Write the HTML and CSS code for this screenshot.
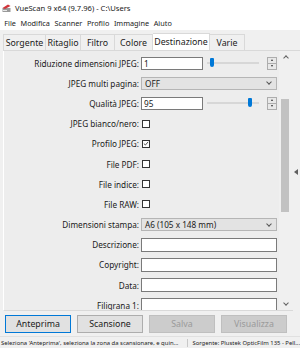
FILE: index.html
```html
<!DOCTYPE html>
<html>
<head>
<meta charset="utf-8">
<link rel="stylesheet" href="styles.css">
</head>
<body>
<div class="win">
  <div class="titlebar">
    <svg class="appicon" width="9" height="9" viewBox="0 0 9 9">
      <rect x="0.5" y="4" width="8" height="4" fill="#9a9a9a"/>
      <path d="M0.5 4 L6 0.5 L8.5 2 L3 5 Z" fill="#d2343a"/>
      <rect x="1" y="6" width="4" height="1" fill="#e6e6e6"/>
    </svg>
    <span class="title">VueScan 9 x64 (9.7.96) - C:\Users</span>
  </div>
  <div class="menubar">
    <span class="mi">File</span><span class="mi">Modifica</span><span class="mi">Scanner</span><span class="mi">Profilo</span><span class="mi">Immagine</span><span class="mi">Aiuto</span>
  </div>
  <div class="tabs">
    <div class="tab t1">Sorgente</div>
    <div class="tab t2">Ritaglio</div>
    <div class="tab t3">Filtro</div>
    <div class="tab t4">Colore</div>
    <div class="tab t5 sel">Destinazione</div>
    <div class="tab t6">Varie</div>
  </div>
  <div class="page">
    <div class="scrollarea">
      <div class="form">
        <div class="lbl">Riduzione dimensioni JPEG:</div>
        <div class="ctl">
          <div class="input short">1</div>
          <div class="slider"><div class="track"></div><div class="thumb" style="left:5px"></div></div>
          <div class="spin"><div class="up"></div><div class="dn"></div></div>
        </div>

        <div class="lbl">JPEG multi pagina:</div>
        <div class="ctl"><div class="select">OFF<span class="chev"></span></div></div>

        <div class="lbl">Qualità JPEG:</div>
        <div class="ctl">
          <div class="input short">95</div>
          <div class="slider"><div class="track"></div><div class="thumb" style="left:43px"></div></div>
          <div class="spin"><div class="up"></div><div class="dn"></div></div>
        </div>

        <div class="lbl">JPEG bianco/nero:</div>
        <div class="ctl"><div class="cb"></div></div>

        <div class="lbl">Profilo JPEG:</div>
        <div class="ctl"><div class="cb checked"><svg width="7" height="7" viewBox="0 0 7 7"><path d="M1 3.6 L2.8 5.3 L6 1.6" fill="none" stroke="#333" stroke-width="1"/></svg></div></div>

        <div class="lbl">File PDF:</div>
        <div class="ctl"><div class="cb"></div></div>

        <div class="lbl">File indice:</div>
        <div class="ctl"><div class="cb"></div></div>

        <div class="lbl">File RAW:</div>
        <div class="ctl"><div class="cb"></div></div>

        <div class="lbl">Dimensioni stampa:</div>
        <div class="ctl"><div class="select">A6 (105 x 148 mm)<span class="chev"></span></div></div>

        <div class="lbl">Descrizione:</div>
        <div class="ctl"><div class="input full"></div></div>

        <div class="lbl">Copyright:</div>
        <div class="ctl"><div class="input full"></div></div>

        <div class="lbl">Data:</div>
        <div class="ctl"><div class="input full"></div></div>

        <div class="lbl">Filigrana 1:</div>
        <div class="ctl"><div class="input full"></div></div>
      </div>
      <div class="vscroll">
        <div class="arrow-up"></div>
        <div class="vtrack"><div class="vthumb"></div></div>
        <div class="arrow-dn"></div>
      </div>
    </div>
    <div class="splitter"><div class="tri"></div></div>
  </div>
  <div class="buttons">
    <div class="btn default">Anteprima</div>
    <div class="btn">Scansione</div>
    <div class="btn disabled">Salva</div>
    <div class="btn disabled">Visualizza</div>
  </div>
  <div class="status">
    <div class="st1">Seleziona 'Anteprima', seleziona la zona da scansionare, e quin...</div>
    <div class="st2">Sorgente: Plustek OpticFilm 135 - Pell...</div>
  </div>
</div>
</body>
</html>
```
FILE: styles.css
```css
html, body {
  margin: 0;
  padding: 0;
  background: #f0f0f0;
}
.win {
  width: 300px;
  height: 348px;
  overflow: hidden;
  font-family: "Noto Sans", "Open Sans", sans-serif;
  color: #1a1a1a;
  background: #f0f0f0;
  display: flex;
  flex-direction: column;
}
.titlebar {
  height: 16px;
  background: #fff;
  display: flex;
  align-items: center;
  padding-left: 2px;
  gap: 4px;
  font-size: 7.6px;
}
.menubar {
  height: 14px;
  background: #fff;
  display: flex;
  align-items: center;
  padding-left: 2px;
  font-size: 7.3px;
}
.mi {
  padding: 0 2.3px;
}
.tabs {
  height: 18px;
  display: flex;
  align-items: flex-end;
  padding-left: 3px;
  padding-top: 2px;
}
.tab {
  height: 16px;
  box-sizing: border-box;
  border: 1px solid #d9d9d9;
  border-bottom: none;
  border-left: none;
  background: #f0f0f0;
  font-size: 8.8px;
  display: flex;
  align-items: center;
  justify-content: center;
}
.t1 { width: 43px; border-left: 1px solid #d9d9d9; }
.t2 { width: 35px; }
.t3 { width: 34px; }
.t4 { width: 38px; }
.t5 { width: 57px; }
.t6 { width: 35px; }
.tab.sel {
  background: #fff;
  height: 17px;
}
.page {
  height: 260px;
  display: flex;
  border-top: 1px solid #d9d9d9;
  margin-left: 3px;
}
.scrollarea {
  flex: 1;
  display: flex;
  border-left: 1px solid #fff;
  background: #ededed;
  border-bottom: 1px solid #d9d9d9;
  overflow: hidden;
}
.form {
  flex: 1;
  display: grid;
  grid-template-columns: 134px 136px;
  grid-auto-rows: 20.2px;
  column-gap: 2px;
  padding-top: 2px;
  padding-left: 1px;
  font-size: 8.2px;
  align-content: start;
}
.lbl {
  text-align: right;
  display: flex;
  align-items: center;
  justify-content: flex-end;
  white-space: nowrap;
}
.ctl {
  display: flex;
  align-items: center;
}
.input {
  height: 13px;
  box-sizing: border-box;
  border: 1px solid #7a7a7a;
  background: #fff;
  display: flex;
  align-items: center;
  padding-left: 2px;
}
.input.short { width: 62px; }
.input.full { width: 136px; height: 14px; }
.slider {
  position: relative;
  width: 54px;
  height: 12px;
  margin-left: 2px;
}
.track {
  position: absolute;
  left: 2px;
  right: 0;
  top: 5px;
  height: 2px;
  background: #d7d7d7;
}
.thumb {
  position: absolute;
  top: 1px;
  width: 4px;
  height: 9px;
  background: #0078d7;
  border-radius: 1px 1px 2px 2px;
}
.spin {
  margin-left: 8px;
  width: 10px;
  height: 13px;
  box-sizing: border-box;
  border: 1px solid #adadad;
  background: #e8e8e8;
  display: flex;
  flex-direction: column;
}
.spin .up, .spin .dn {
  flex: 1;
  position: relative;
}
.spin .up { border-bottom: 1px solid #adadad; }
.spin .up::after, .spin .dn::after {
  content: "";
  position: absolute;
  left: 2.5px;
  top: 1.5px;
  border-left: 1.5px solid transparent;
  border-right: 1.5px solid transparent;
}
.spin .up::after { border-bottom: 2px solid #333; }
.spin .dn::after { border-top: 2px solid #333; }
.select {
  width: 136px;
  height: 13px;
  box-sizing: border-box;
  border: 1px solid #b5b5b5;
  background: #e3e3e3;
  display: flex;
  align-items: center;
  padding-left: 3px;
  position: relative;
}
.chev {
  position: absolute;
  right: 5px;
  top: 2.5px;
  width: 3px;
  height: 3px;
  border-right: 1px solid #555;
  border-bottom: 1px solid #555;
  transform: rotate(45deg);
}
.cb {
  width: 8px;
  height: 8px;
  box-sizing: border-box;
  border: 1px solid #333;
  background: #fff;
  margin-left: 1px;
  display: flex;
  align-items: center;
  justify-content: center;
}
.cb svg { display: block; }
.vscroll {
  width: 14px;
  display: flex;
  flex-direction: column;
  align-items: center;
  background: #f0f0f0;
}
.arrow-up, .arrow-dn {
  height: 10px;
  width: 14px;
  position: relative;
}
.arrow-up::after, .arrow-dn::after {
  content: "";
  position: absolute;
  left: 5px;
  width: 3px;
  height: 3px;
  border-left: 1px solid #606060;
  border-top: 1px solid #606060;
}
.arrow-up::after { top: 5px; transform: rotate(45deg); }
.arrow-dn::after { top: 1px; transform: rotate(225deg); }
.vtrack {
  flex: 1;
  width: 14px;
  position: relative;
}
.vthumb {
  position: absolute;
  left: 2px;
  top: 38px;
  width: 8px;
  height: 113px;
  background: #c2c2c2;
}
.splitter {
  width: 7px;
  position: relative;
  background: #f0f0f0;
}
.tri {
  position: absolute;
  left: 1px;
  top: 118px;
  border-top: 3px solid transparent;
  border-bottom: 3px solid transparent;
  border-right: 4px solid #606060;
}
.buttons {
  display: flex;
  gap: 6px;
  padding: 4px 0 0 5px;
  height: 21px;
}
.btn {
  width: 66px;
  height: 18px;
  box-sizing: border-box;
  border: 1px solid #adadad;
  background: #e1e1e1;
  display: flex;
  align-items: center;
  justify-content: center;
  font-size: 8.8px;
}
.btn.default { border: 1px solid #0078d7; }
.btn.disabled {
  background: #cccccc;
  border-color: #bfbfbf;
  color: #9a9a9a;
}
.status {
  flex: 1;
  display: flex;
  align-items: center;
  font-size: 5.9px;
  border-top: 1px solid #e0e0e0;
  white-space: nowrap;
  overflow: hidden;
}
.st1 {
  width: 188px;
  padding-left: 1px;
  border-right: 1px solid #c8c8c8;
  overflow: hidden;
}
.st2 {
  padding-left: 4px;
}
```
